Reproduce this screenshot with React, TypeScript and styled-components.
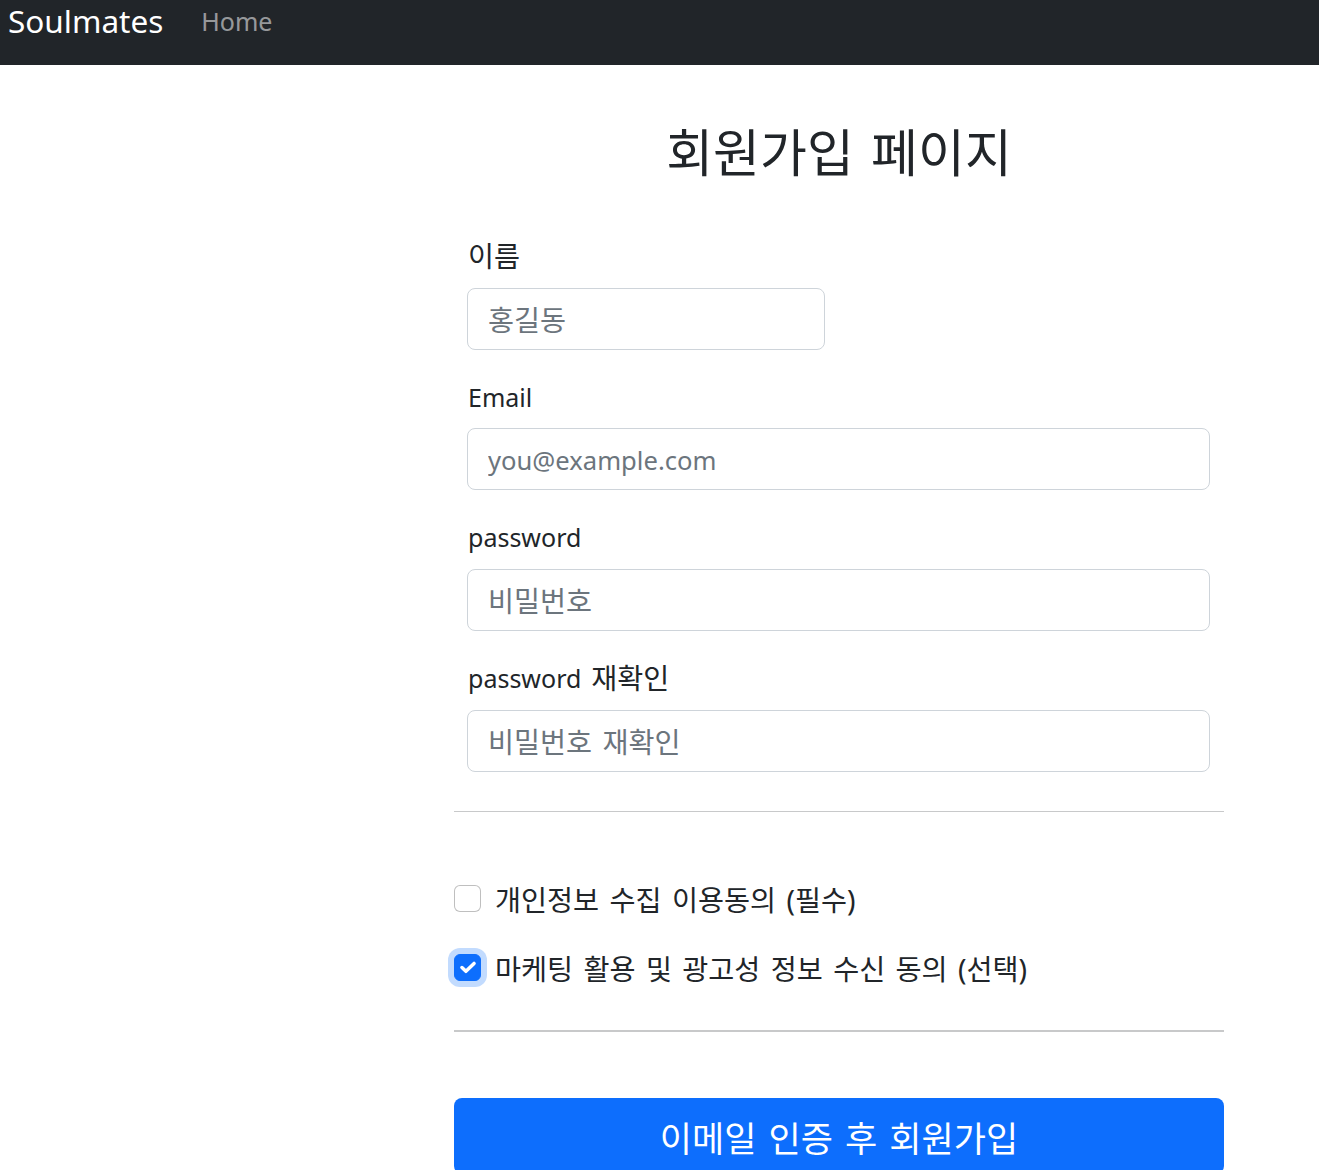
import React from "react";
import styled, { createGlobalStyle } from "styled-components";

const Global = createGlobalStyle`
  html, body { margin: 0; padding: 0; background: #fff; }
  body {
    font-family: "Noto Sans", "Noto Sans CJK KR", sans-serif;
    color: #212529;
  }
  * { box-sizing: border-box; }
`;

const NavBar = styled.nav`
  height: 65px;
  background: #212529;
  padding: 0 8px;
`;

const NavRow = styled.div`
  height: 42px;
  display: flex;
  align-items: center;
  gap: 38px;
`;

const Brand = styled.a`
  font-size: 31.5px;
  line-height: 1;
  color: #fff;
  text-decoration: none;
`;

const NavLink = styled.a`
  font-size: 25px;
  line-height: 1;
  color: rgba(255, 255, 255, 0.55);
  text-decoration: none;
  margin-top: 1px;
`;

const Main = styled.main`
  padding: 0 95px 80px 454px;
`;

const Title = styled.h1`
  margin: 60px 0 0;
  height: 55px;
  line-height: 55px;
  font-size: 51px;
  font-weight: 400;
  text-align: center;
  word-spacing: 4px;
  color: #212529;
`;

const Ko = styled.span<{ $lead?: boolean }>`
  font-size: 1.13em;
  word-spacing: 3px;
  line-height: 1;
  margin-left: ${(p) => (p.$lead ? "10px" : "0")};
`;

const Fields = styled.div`
  padding: 58px 14px 0 13px;
  display: flex;
  flex-direction: column;
  gap: 29.2px;
`;

const Field = styled.div`
  display: flex;
  flex-direction: column;
  align-items: flex-start;
`;

const Label = styled.label`
  display: flex;
  align-items: center;
  white-space: pre;
  font-size: 25px;
  line-height: 37px;
  height: 37px;
  margin-bottom: 12.5px;
  padding-left: 1px;
`;

const Input = styled.input<{ $w?: number; $ko?: boolean }>`
  width: ${(p) => (p.$w ? `${p.$w}px` : "100%")};
  height: 62px;
  border: 1px solid #ced4da;
  border-radius: 8px;
  padding: 3px 20px 0;
  font-family: "Noto Sans", "Noto Sans CJK KR", sans-serif;
  font-size: ${(p) => (p.$ko ? "28.3px" : "25.6px")};
  color: #212529;
  word-spacing: 3px;
  outline: none;
  &::placeholder { color: #6c757d; }
`;

const Rule = styled.hr<{ $thick?: boolean }>`
  margin: ${(p) => (p.$thick ? "0" : "39.5px 0 0")};
  border: 0;
  border-top: ${(p) => (p.$thick ? "2px" : "1px")} solid #c8c9ca;
`;

const Checks = styled.div`
  padding: 72px 0 49px;
  display: flex;
  flex-direction: column;
  gap: 41px;
`;

const CheckRow = styled.label`
  display: flex;
  align-items: center;
  gap: 14px;
  height: 28px;
  font-size: 28.3px;
  word-spacing: 3px;
  cursor: pointer;
`;

const Box = styled.span<{ $checked?: boolean }>`
  width: 27px;
  height: 27px;
  flex: none;
  border-radius: 6px;
  border: 1px solid ${(p) => (p.$checked ? "#0d6efd" : "rgba(0,0,0,0.25)")};
  background: ${(p) => (p.$checked ? "#0d6efd" : "#fff")};
  box-shadow: ${(p) => (p.$checked ? "0 0 0 6px rgba(13,110,253,0.25)" : "none")};
  display: flex;
  align-items: center;
  justify-content: center;
`;

const SubmitButton = styled.button`
  display: block;
  width: 100%;
  height: 76px;
  margin-top: 66px;
  border: 0;
  border-radius: 8px;
  background: #0d6efd;
  color: #fff;
  font-family: "Noto Sans", "Noto Sans CJK KR", sans-serif;
  font-size: 35px;
  word-spacing: 3px;
  cursor: pointer;
`;

const Check = () => (
  <svg width="22" height="22" viewBox="0 0 20 20">
    <path d="M4.5 10.5l3.6 3.4L15.5 6.8" fill="none" stroke="#fff" strokeWidth="3.2" strokeLinecap="round" strokeLinejoin="round" />
  </svg>
);

export default function App() {
  return (
    <>
      <Global />
      <NavBar>
        <NavRow>
          <Brand href="#">Soulmates</Brand>
          <NavLink href="#">Home</NavLink>
        </NavRow>
      </NavBar>
      <Main>
        <Title>회원가입 페이지</Title>
        <Fields>
          <Field>
            <Label>
              <Ko>이름</Ko>
            </Label>
            <Input $w={358} $ko placeholder="홍길동" />
          </Field>
          <Field>
            <Label>Email</Label>
            <Input placeholder="you@example.com" />
          </Field>
          <Field>
            <Label>password</Label>
            <Input type="password" $ko placeholder="비밀번호" />
          </Field>
          <Field>
            <Label>
              password
              <Ko $lead>재확인</Ko>
            </Label>
            <Input type="password" $ko placeholder="비밀번호 재확인" />
          </Field>
        </Fields>
        <Rule />
        <Checks>
          <CheckRow>
            <Box />
            개인정보 수집 이용동의 (필수)
          </CheckRow>
          <CheckRow>
            <Box $checked>
              <Check />
            </Box>
            마케팅 활용 및 광고성 정보 수신 동의 (선택)
          </CheckRow>
        </Checks>
        <Rule $thick />
        <SubmitButton>이메일 인증 후 회원가입</SubmitButton>
      </Main>
    </>
  );
}
